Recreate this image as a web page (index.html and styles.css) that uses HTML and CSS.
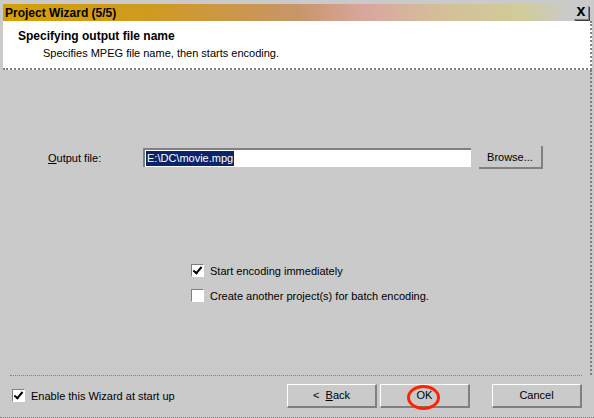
FILE: index.html
```html
<!DOCTYPE html>
<html lang="en">

<head>
  <meta charset="UTF-8" />
  <meta name="viewport" content="width=device-width, initial-scale=1.0" />
  <title>Project Wizard</title>
  <link rel="stylesheet" href="styles.css">
</head>

<body>
  <div class="window">
    <div class="titlebar">
      <span class="title">Project Wizard (5/5)</span>
      <span class="close">x</span>
    </div>

    <div class="header">
      <div class="header-title">Specifying output file name</div>
      <div class="header-sub">Specifies MPEG file name, then starts encoding.</div>
    </div>

    <div class="content">
      <div class="file-row">
        <label class="file-label"><u>O</u>utput file:</label>
        <div class="file-input"><span class="sel">E:\DC\movie.mpg</span></div>
        <div class="btn browse">Browse...</div>
      </div>

      <div class="options">
        <div class="check-row">
          <span class="check checked"></span>
          <span>Start encoding immediately</span>
        </div>
        <div class="check-row">
          <span class="check"></span>
          <span>Create another project(s) for batch encoding.</span>
        </div>
      </div>
    </div>

    <div class="footer">
      <div class="check-row">
        <span class="check checked"></span>
        <span>Enable this Wizard at start up</span>
      </div>
      <div class="buttons">
        <div class="btn nav"><span>&lt;&nbsp;&nbsp;<u>B</u>ack</span></div>
        <div class="btn nav ok">OK<span class="ring"></span></div>
        <div class="btn nav cancel">Cancel</div>
      </div>
    </div>
  </div>
</body>

</html>
```

FILE: styles.css
```css
body {
  margin: 0;
  padding: 0;
  font-family: "Liberation Sans", Arial, sans-serif;
  font-size: 11px;
  color: #000;
}

.window {
  width: 594px;
  height: 418px;
  box-sizing: border-box;
  background-color: #cacaca;
  padding: 4px 2px 0 3px;
  display: flex;
  flex-direction: column;
  border-bottom: 1px dotted #808080;
}

.titlebar {
  height: 17px;
  display: flex;
  align-items: center;
  justify-content: space-between;
  background: linear-gradient(to right, #d4a000 0, #d09a20 25%, #c8956a 50%, #d8a8a0 62%, #d4c098 75%, #d0cc98 88%, #cacaca 96%);
}

.title {
  font-weight: bold;
  font-size: 12px;
  padding-left: 2px;
}

.close {
  width: 14px;
  height: 13px;
  margin-right: 3px;
  background-color: #cacaca;
  border-right: 1px solid #808080;
  border-bottom: 1px solid #808080;
  box-shadow: 1px 1px 0 #404040;
  font-weight: bold;
  font-size: 16px;
  line-height: 10px;
  text-align: center;
}

.header {
  height: 47px;
  background-color: #fff;
  border-bottom: 2px dotted #808080;
  border-right: 2px dotted #808080;
  padding-left: 15px;
}

.header-title {
  font-weight: bold;
  font-size: 12px;
  margin-top: 8px;
}

.header-sub {
  margin-top: 4px;
  padding-left: 25px;
}

.content {
  flex: 1;
  display: flex;
  flex-direction: column;
  border-right: 2px dotted #808080;
}

.file-row {
  display: flex;
  align-items: center;
  margin-top: 76px;
  padding-left: 45px;
}

.file-label {
  width: 95px;
}

.file-input {
  width: 325px;
  height: 16px;
  background-color: #fff;
  border-top: 2px solid #808080;
  border-left: 2px solid #808080;
  padding: 1px 0 0 1px;
  margin-right: 8px;
}

.sel {
  background-color: #0a246a;
  color: #fff;
  padding: 0 1px;
  line-height: 15px;
  display: inline-block;
}

.btn {
  box-sizing: border-box;
  height: 23px;
  display: flex;
  align-items: center;
  justify-content: center;
  border-right: 2px solid #808080;
  border-bottom: 2px solid #808080;
}

.browse {
  width: 64px;
}

.options {
  margin-top: 95px;
  padding-left: 188px;
  display: flex;
  flex-direction: column;
  gap: 12px;
}

.check-row {
  display: flex;
  align-items: center;
  gap: 6px;
}

.check {
  width: 11px;
  height: 11px;
  background-color: #fff;
  border-top: 1px solid #808080;
  border-left: 1px solid #808080;
  border-right: 1px solid #fff;
  border-bottom: 1px solid #fff;
  position: relative;
}

.check.checked::after {
  content: "";
  position: absolute;
  left: 3px;
  top: 0px;
  width: 3px;
  height: 7px;
  border-right: 2px solid #000;
  border-bottom: 2px solid #000;
  transform: rotate(40deg);
}

.footer {
  height: 39px;
  border-top: 1px dotted #808080;
  margin: 0 10px 2px 7px;
  display: flex;
  align-items: center;
  justify-content: space-between;
  padding-left: 2px;
}

.buttons {
  display: flex;
  gap: 3px;
}

.nav {
  width: 90px;
  height: 24px;
  border-left: 1px solid #fff;
  border-top: 1px solid #fff;
}

.ok {
  position: relative;
  margin-right: 19px;
}

.ring {
  position: absolute;
  left: 26px;
  top: 0px;
  width: 33px;
  height: 25px;
  border: 3px solid #ff2200;
  border-radius: 50%;
  box-sizing: border-box;
}
```
